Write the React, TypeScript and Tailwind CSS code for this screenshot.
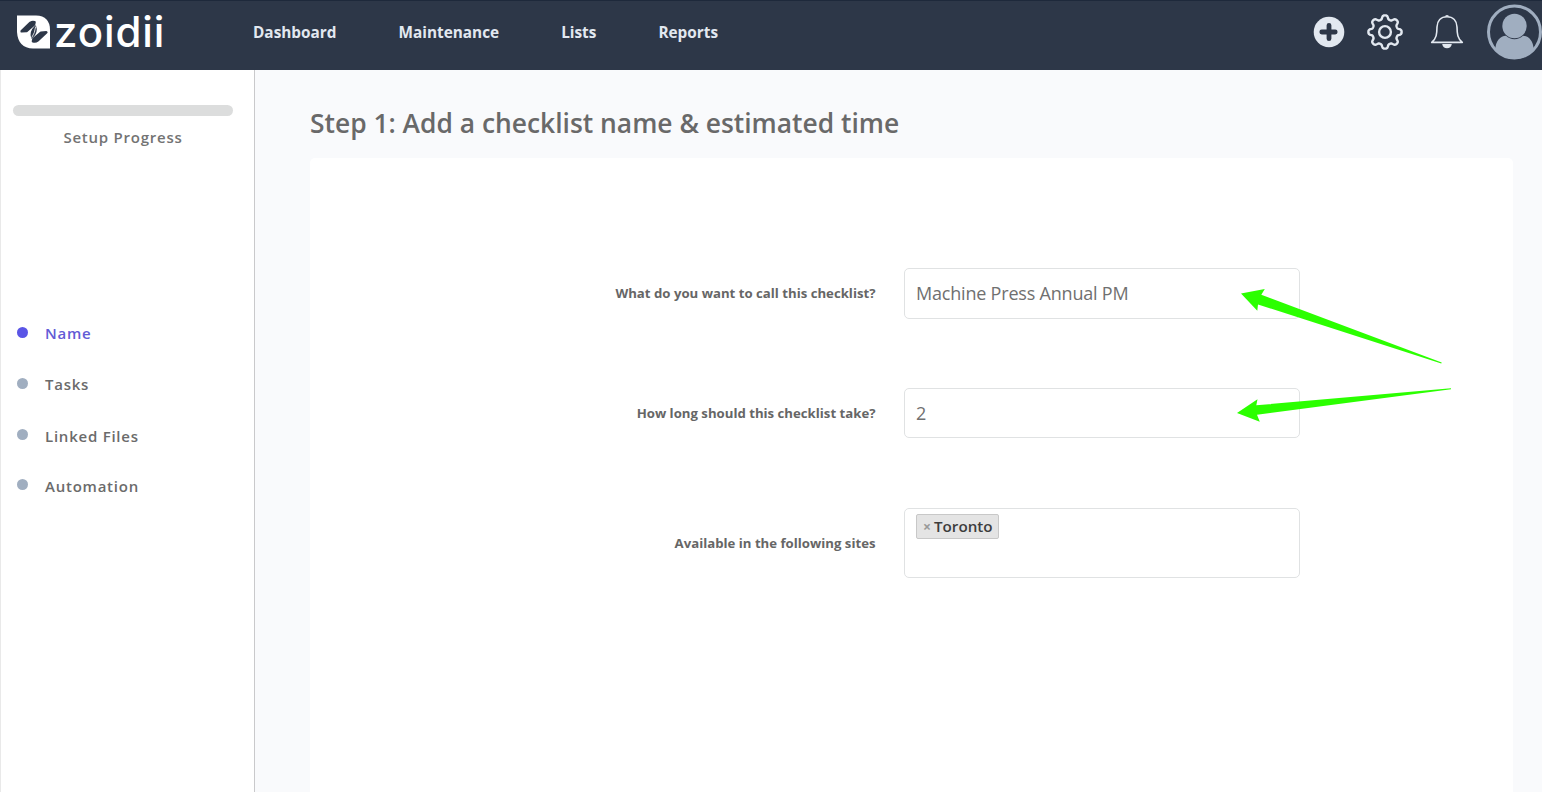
import { useState } from "react";

// ---------------------------------------------------------------------------
// Data
// ---------------------------------------------------------------------------

const NAV_LINKS = ["Dashboard", "Maintenance", "Lists", "Reports"];

const STEPS = [
  { label: "Name", height: "h-[51px]", dot: "mb-px" },
  { label: "Tasks", height: "h-[52px]", dot: "mb-px" },
  { label: "Linked Files", height: "h-[50px]", dot: "mb-[3px]" },
  { label: "Automation", height: "h-[51px]", dot: "mb-[3px]" },
];

// ---------------------------------------------------------------------------
// Icons
// ---------------------------------------------------------------------------

function LogoMark() {
  return (
    <svg width="33" height="34" viewBox="0 0 33 34" className="shrink-0">
      <path d="M0 0.500H19Q33 1 33 15V33.500H16Q1 33 0 17Z" fill="#fff" />
      <g fill="#2d3748" stroke="#2d3748" strokeLinejoin="round">
        <path d="M4.700 16.300L13.500 7.800Q15.500 6.500 17.500 7.300L17 9.500L9.500 16Z" strokeWidth="2.600" />
        <path d="M16 26.200Q18.500 27 20.500 25.500L29.300 17.300L24 17.700L16.500 24Z" strokeWidth="2.600" />
        <path d="M18.500 11Q12.500 17 14.800 23Q21 17.500 18.500 11Z" strokeWidth="1.200" />
      </g>
      <path d="M18.700 11.500Q18 18 14.600 22.800" fill="none" stroke="#fff" strokeWidth="0.800" />
    </svg>
  );
}

function PlusIcon() {
  return (
    <svg width="32" height="32" viewBox="0 0 32 32">
      <circle cx="16" cy="16" r="15.300" fill="#e2e8f0" />
      <path d="M8.800 16H22.200M16 9.300V22.700" stroke="#2d3748" strokeWidth="4.800" strokeLinecap="round" />
    </svg>
  );
}

// Eight rounded teeth, sampled around the circle
const GEAR_POINTS = Array.from({ length: 192 }, (_, i) => {
  const angle = (i / 192) * Math.PI * 2;
  const radius = 14.7 + 2.05 * Math.tanh(1.7 * Math.cos(8 * angle));
  return `${(18 + radius * Math.cos(angle)).toFixed(2)},${(18 + radius * Math.sin(angle)).toFixed(2)}`;
}).join(" ");

function GearIcon() {
  return (
    <svg width="36" height="36" viewBox="0 0 36 36" fill="none" stroke="#e2e8f0" strokeWidth="2.400">
      <polygon points={GEAR_POINTS} strokeLinejoin="round" />
      <circle cx="18" cy="18" r="5.900" />
    </svg>
  );
}

function BellIcon() {
  return (
    <svg width="34" height="36" viewBox="0 0 34 36">
      <path
        d="M17 2.700C10.800 2.700 7.200 7 7 13C6.900 20 6.500 24.500 1.700 28.400H32.300C27.500 24.500 27.100 20 27 13C26.800 7 23.200 2.700 17 2.700Z"
        fill="none"
        stroke="#e2e8f0"
        strokeWidth="1.600"
        strokeLinejoin="round"
      />
      <path d="M15 2.500Q15 1 17 1T19 2.500Z" fill="#e2e8f0" />
      <path d="M12.200 30H21.800Q21 34.300 17 34.300T12.200 30Z" fill="#e2e8f0" />
    </svg>
  );
}

function AvatarIcon() {
  return (
    <svg width="56" height="56" viewBox="0 0 56 56">
      <circle cx="28.500" cy="28" r="26" fill="none" stroke="#a0aec0" strokeWidth="3" />
      <circle cx="28.500" cy="22" r="12.200" fill="#a0aec0" />
      <path d="M9.500 46C9 38 14 31.700 20 31.700C24.500 36.300 32.500 36.300 37 31.700C43 31.700 48 38 47.500 46C43.500 51.500 36 55 28.500 55S13.500 51.500 9.500 46Z" fill="#a0aec0" />
    </svg>
  );
}

// ---------------------------------------------------------------------------
// Layout pieces
// ---------------------------------------------------------------------------

function Header() {
  return (
    <header className="flex h-[70px] shrink-0 items-start border-t border-[#1e293b] bg-[#2d3748]">
      <div className="ml-[17px] mt-3.5 flex w-[236px] items-center gap-[4px]">
        <LogoMark />
        <span className="font-[Inter,sans-serif] text-[42px] leading-[34px] font-medium tracking-[0.9px] text-white">zoidii</span>
      </div>
      <nav className="mt-5 flex gap-[62px] text-[15.35px] leading-[22px] font-bold text-[#e2e8f0]">
        {NAV_LINKS.map((link) => (
          <a key={link} href="#">{link}</a>
        ))}
      </nav>
      <div className="ml-auto flex h-[62px] items-center">
        <PlusIcon />
        <span className="ml-[22px]"><GearIcon /></span>
        <span className="ml-[27px]"><BellIcon /></span>
        <span className="ml-[22px]"><AvatarIcon /></span>
      </div>
    </header>
  );
}

function Sidebar({ active, onSelect }: { active: string; onSelect: (step: string) => void }) {
  return (
    <aside className="w-[255px] shrink-0 border-x border-l-[#e9e9e9] border-r-[#c9c9cb] bg-white">
      <div className="ml-3 mt-[35px] h-[11px] w-[220px] rounded-full bg-[#dcdddd]" />
      <p className="ml-3 mt-[10px] w-[220px] text-center text-[15px] leading-[22px] font-semibold tracking-[0.76px] text-[#737373]">
        Setup Progress
      </p>
      <ul className="mt-[174px]">
        {STEPS.map(({ label, height, dot }) => (
          <li key={label} className={height}>
            <button
              type="button"
              onClick={() => onSelect(label)}
              className={`flex items-center pl-4 text-[15px] leading-[22px] font-semibold tracking-[0.76px] ${
                active === label ? "text-[#625bd6]" : "text-[#6b6b6b]"
              }`}
            >
              <span className={`mr-[17px] size-[11px] rounded-full ${dot} ${active === label ? "bg-[#5a55e6]" : "bg-[#a0aec0]"}`} />
              {label}
            </button>
          </li>
        ))}
      </ul>
    </aside>
  );
}

function FieldRow({ label, children }: { label: string; children: React.ReactNode }) {
  return (
    <div className="flex items-center">
      <label className="mr-[28.5px] w-[565.5px] pb-px text-right text-[13.2px] leading-5 font-bold text-[#666]">{label}</label>
      {children}
    </div>
  );
}

// Callout arrows pointing at the two text inputs
function Arrows() {
  return (
    <svg className="pointer-events-none absolute left-[1220px] top-[260px]" width="250" height="190" viewBox="0 0 250 190" fill="#2bff00">
      <path d="M21 33.500L44.800 29L41.300 34.700L221.700 102.600L221.300 103.600L38 44.500L37.300 50.800Z" />
      <path d="M17 153L37.500 139.300L36.300 145.300L231 128.300V129.300L37 154.700L39.800 161.800Z" />
    </svg>
  );
}

const inputBase =
  "w-[396px] rounded-[5px] border border-[#e0e2e3] bg-white px-[11px] text-[18px] text-[#707070] outline-none";

export default function App() {
  const [step, setStep] = useState("Name");
  const [name, setName] = useState("Machine Press Annual PM");
  const [hours, setHours] = useState("2");

  return (
    <div className="relative flex h-[792px] w-[1542px] flex-col overflow-hidden font-['Open_Sans',sans-serif]">
      <Header />
      <div className="flex min-h-0 flex-1">
        <Sidebar active={step} onSelect={setStep} />
        <main className="flex flex-1 flex-col bg-[#f9fafc] pl-[55px] pr-[29px]">
          <h1 className="mt-[35px] text-[26.4px] leading-9 font-semibold text-[#696969]">
            Step 1: Add a checklist name &amp; estimated time
          </h1>
          <section className="mt-[17px] flex-1 rounded-t-[5px] bg-white pt-[110px]">
            <FieldRow label="What do you want to call this checklist?">
              <input
                className={`${inputBase} h-[51px] pb-px tracking-[-0.2px]`}
                value={name}
                onChange={(e) => setName(e.target.value)}
              />
            </FieldRow>
            <div className="mt-[69px]">
              <FieldRow label="How long should this checklist take?">
                <input className={`${inputBase} h-[50px]`} value={hours} onChange={(e) => setHours(e.target.value)} />
              </FieldRow>
            </div>
            <div className="mt-[70px]">
              <FieldRow label="Available in the following sites">
                <div className={`${inputBase} h-[70px] pt-[5px]`}>
                  <span className="flex h-[25px] w-[83px] items-center rounded-[2px] border border-[#c8c8c8] bg-[#e4e4e4] pl-1.5 text-[15.2px] font-semibold text-[#3d3d3d]">
                    <span className="mr-[3px] text-[14px] font-bold text-[#999]">×</span>
                    Toronto
                  </span>
                </div>
              </FieldRow>
            </div>
          </section>
        </main>
      </div>
      <Arrows />
    </div>
  );
}
